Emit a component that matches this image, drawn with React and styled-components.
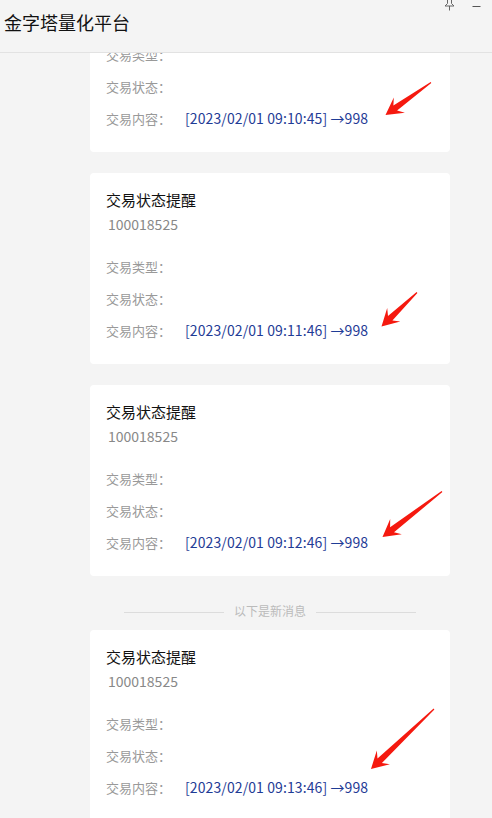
import React from "react";
import styled, { createGlobalStyle } from "styled-components";

const GlobalStyle = createGlobalStyle`
	html, body {
		margin: 0;
		padding: 0;
		background: #f4f4f4;
	}
	body {
		font-family: "Microsoft YaHei", "Noto Sans CJK SC", "Noto Sans", sans-serif;
	}
`

const Page = styled.div`
	height: 100vh;
	display: flex;
	flex-direction: column;
	overflow: hidden;
	background: #f4f4f4;
`

const Header = styled.div`
	height: 52px;
	flex-shrink: 0;
	display: flex;
	justify-content: space-between;
	align-items: flex-start;
	border-bottom: 1px solid #e2e2e2;
	background: #f4f4f4;
	position: relative;
	z-index: 2;
`

const Title = styled.h1`
	margin: 0;
	padding: 11px 0 0 4px;
	font-size: 18px;
	line-height: 22px;
	font-weight: normal;
	color: #111;
`

const Controls = styled.div`
	display: flex;
	align-items: flex-start;
	gap: 17px;
	margin-right: 11px;
`

const Content = styled.div`
	flex: 1;
	overflow: hidden;
	padding-left: 90px;
`

const List = styled.div`
	display: flex;
	flex-direction: column;
	width: 360px;
	margin-top: ${props => props.offset}px;
`

const Card = styled.div`
	position: relative;
	background: #fff;
	border-radius: 4px;
	padding: 17px 16px 22px;
	box-sizing: border-box;
	height: 191px;
	margin-top: ${props => (props.first ? 0 : 21)}px;
`

const CardTitle = styled.div`
	font-size: 15px;
	line-height: 20px;
	color: #111;
`

const CardId = styled.div`
	margin-top: 4px;
	padding-left: 2px;
	font-size: 14px;
	line-height: 20px;
	color: #888;
`

const Rows = styled.div`
	margin-top: 22px;
	display: flex;
	flex-direction: column;
	gap: 12px;
`

const Row = styled.div`
	display: flex;
	align-items: center;
	height: 20px;
`

const Label = styled.span`
	width: 79px;
	flex-shrink: 0;
	font-size: 13px;
	color: #999;
`

const Value = styled.span`
	font-size: 14px;
	color: #1f3c96;
	white-space: nowrap;
	letter-spacing: 0.1px;
`

const Divider = styled.div`
	height: 54px;
	box-sizing: border-box;
	padding-top: 14px;
	margin: 0 34px;
	display: flex;
	align-items: center;
	gap: 10px;
`

const DividerLine = styled.div`
	flex: 1;
	height: 1px;
	margin-top: 4px;
	background: #dcdcdc;
`

const DividerText = styled.span`
	font-size: 12px;
	color: #bbb;
	white-space: nowrap;
`

const ArrowLayer = styled.svg`
	position: absolute;
	left: 0;
	top: 0;
	width: 360px;
	height: 191px;
	pointer-events: none;
	overflow: visible;
`

function arrowPoints(tail, tip) {
	const dx = tip[0] - tail[0];
	const dy = tip[1] - tail[1];
	const len = Math.sqrt(dx * dx + dy * dy);
	const ux = dx / len;
	const uy = dy / len;
	const nx = -uy;
	const ny = ux;
	const headLen = 17;
	const notch = 12;
	const headW = 9.5;
	const shaftW = 3.2;
	const b = [tip[0] - ux * headLen, tip[1] - uy * headLen];
	const s = [tip[0] - ux * notch, tip[1] - uy * notch];
	const pts = [
		[tail[0] + nx * 0.6, tail[1] + ny * 0.6],
		[s[0] + nx * shaftW, s[1] + ny * shaftW],
		[b[0] + nx * headW, b[1] + ny * headW],
		tip,
		[b[0] - nx * headW, b[1] - ny * headW],
		[s[0] - nx * shaftW, s[1] - ny * shaftW],
		[tail[0] - nx * 0.6, tail[1] - ny * 0.6],
	];
	return pts.map(p => p[0].toFixed(1) + "," + p[1].toFixed(1)).join(" ");
}

const Arrow = ({ tail, tip }) => (
	<ArrowLayer viewBox="0 0 360 191">
		<polygon points={arrowPoints(tail, tip)} fill="#f5190f" />
	</ArrowLayer>
)

const messages = [
	{ time: "2023/02/01 09:10:45", tail: [341, 121.5], tip: [295.5, 154] },
	{ time: "2023/02/01 09:11:46", tail: [327, 119.5], tip: [291.5, 153.5] },
	{ time: "2023/02/01 09:12:46", tail: [352, 106.5], tip: [292.5, 152], newAfter: true },
	{ time: "2023/02/01 09:13:46", tail: [344, 79], tip: [281, 139] },
]

class App extends React.Component {
	render() {
		return (
			<Page>
				<GlobalStyle />
				<Header>
					<Title>金字塔量化平台</Title>
					<Controls>
						<svg width="11" height="11" viewBox="0 0 11 11">
							<path d="M3.5 0 V3.5 L1 6 H10 L7.5 3.5 V0" fill="none" stroke="#666" strokeWidth="1" />
							<path d="M5.5 6 V10.5" stroke="#666" strokeWidth="1" />
						</svg>
						<svg width="9" height="10" viewBox="0 0 9 10">
							<path d="M0.5 6.5 H8.5" stroke="#555" strokeWidth="1" />
						</svg>
					</Controls>
				</Header>
				<Content>
					<List offset={-92}>
						{messages.map((msg, i) => (
							<React.Fragment key={msg.time}>
								<Card first={i === 0 || messages[i - 1].newAfter}>
									<CardTitle>交易状态提醒</CardTitle>
									<CardId>100018525</CardId>
									<Rows>
										<Row><Label>交易类型：</Label></Row>
										<Row><Label>交易状态：</Label></Row>
										<Row>
											<Label>交易内容：</Label>
											<Value>[{msg.time}] →998</Value>
										</Row>
									</Rows>
									<Arrow tail={msg.tail} tip={msg.tip} />
								</Card>
								{msg.newAfter && (
									<Divider>
										<DividerLine />
										<DividerText>以下是新消息</DividerText>
										<DividerLine />
									</Divider>
								)}
							</React.Fragment>
						))}
					</List>
				</Content>
			</Page>
		);
	}
}

export default App;
